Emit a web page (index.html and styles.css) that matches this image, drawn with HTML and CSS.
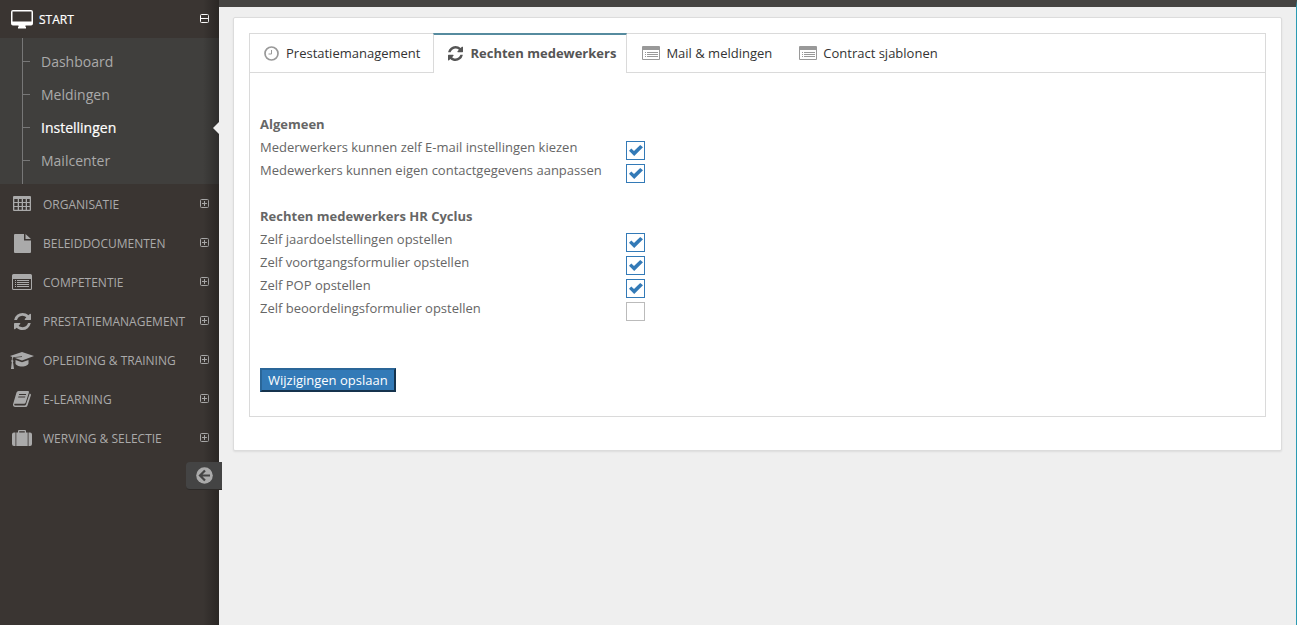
FILE: index.html
```html
<!DOCTYPE html>
<html lang="nl">
<head>
<meta charset="utf-8">
<title>Instellingen - Rechten medewerkers</title>
<link rel="stylesheet" href="styles.css">
</head>
<body>
<svg class="defs" aria-hidden="true">
  <symbol id="plus" viewBox="0 0 9 9"><path d="M1.500.5h6a1 1 0 0 1 1 1v6a1 1 0 0 1-1 1h-6a1 1 0 0 1-1-1v-6a1 1 0 0 1 1-1zM2 4.500h5M4.500 2v5" fill="none" stroke="currentColor"/></symbol>
  <symbol id="minus" viewBox="0 0 9 9"><path d="M1.500.5h6a1 1 0 0 1 1 1v6a1 1 0 0 1-1 1h-6a1 1 0 0 1-1-1v-6a1 1 0 0 1 1-1zM1 4.500h7" fill="none" stroke="currentColor"/></symbol>
  <symbol id="list" viewBox="0 0 20 16"><path fill="currentColor" fill-rule="evenodd" d="M1.500 0h17A1.500 1.500 0 0 1 20 1.500v13a1.500 1.500 0 0 1-1.500 1.500h-17A1.500 1.500 0 0 1 0 14.500v-13A1.500 1.500 0 0 1 1.500 0zM1 5v9.500l.5.5h17l.5-.5V5zM3 6h1v1H3zM5 6h12v1H5zM3 8h1v1H3zM5 8h12v1H5zM3 10h1v1H3zM5 10h12v1H5zM3 12h1v1H3zM5 12h12v1H5z"/></symbol>
  <symbol id="list-small" viewBox="0 0 18 14"><path fill="currentColor" fill-rule="evenodd" d="M1 0h16a1 1 0 0 1 1 1v12a1 1 0 0 1-1 1H1a1 1 0 0 1-1-1V1a1 1 0 0 1 1-1zM1 4v9h16V4zM3 6h1v1H3zM5 6h11v1H5zM3 8h1v1H3zM5 8h11v1H5zM3 10h1v1H3zM5 10h11v1H5z"/></symbol>
  <symbol id="refresh" viewBox="0 0 1536 1536"><path fill="currentColor" d="M1511 928q0 5-1 7-64 268-268 434.500T764 1536q-146 0-282.500-55T238 1324l-129 129q-19 19-45 19t-45-19-19-45V960q0-26 19-45t45-19h448q26 0 45 19t19 45-19 45l-137 137q71 66 161 102t187 36q134 0 250-65t186-179q11-17 53-117 8-23 30-23h192q13 0 22.500 9.500t9.500 22.500zm25-800v448q0 26-19 45t-45 19h-448q-26 0-45-19t-19-45 19-45l138-138Q969 256 768 256q-134 0-250 65T332 500q-11 17-53 117-8 23-30 23H50q-13 0-22.500-9.500T18 608v-7q65-268 270-434.500T768 0q146 0 284 55.500T1297 212l130-129q19-19 45-19t45 19 19 45z"/></symbol>
  <symbol id="check" viewBox="0 0 14 11"><path fill="currentColor" d="M0 5.800 2.300 3.500 5 6.100 11.200 0 14 2.300 5.200 11z"/></symbol>
</svg>
<div class="app">
  <aside class="sidebar">
    <nav aria-label="Hoofdmenu">
      <a class="menu-item open" href="#"><svg class="menu-icon" viewBox="0 0 22 19" width="22" height="19"><path fill="currentColor" fill-rule="evenodd" d="M2 0h18a2 2 0 0 1 2 2v11.500a2 2 0 0 1-2 2h-5.500V17H15v1.500H7V17h.5v-1.500H2a2 2 0 0 1-2-2V2a2 2 0 0 1 2-2zM1.500 1.500v10h19v-10z"/></svg><span>START</span><svg class="toggle" width="9" height="9"><use href="#minus"/></svg></a>
      <ul class="submenu">
        <li><a href="#">Dashboard</a></li>
        <li><a href="#">Meldingen</a></li>
        <li class="current"><a href="#" aria-current="page">Instellingen</a></li>
        <li><a href="#">Mailcenter</a></li>
      </ul>
      <a class="menu-item" href="#"><svg class="menu-icon" viewBox="0 0 18 16" width="18" height="16"><path fill="currentColor" fill-rule="evenodd" d="M1 0h16a1 1 0 0 1 1 1v13a1 1 0 0 1-1 1H1a1 1 0 0 1-1-1V1a1 1 0 0 1 1-1zM1.300 3v3h3.400V3zm4.700 0v3h2.700V3zm4 0v3h2.700V3zm4 0v3h2.700V3zM1.300 7v3h3.400V7zM6 7v3h2.700V7zm4 0v3h2.700V7zm4 0v3h2.700V7zM1.300 11v2.700h3.400V11zM6 11v2.700h2.700V11zm4 0v2.700h2.700V11zm4 0v2.700h2.700V11z"/></svg><span>ORGANISATIE</span><svg class="toggle" width="9" height="9"><use href="#plus"/></svg></a>
      <a class="menu-item" href="#"><svg class="menu-icon" viewBox="0 0 17 19" width="17" height="19"><path fill="currentColor" d="M1 0h9v6.500h7V18a1 1 0 0 1-1 1H1a1 1 0 0 1-1-1V1a1 1 0 0 1 1-1zm10.500 0L17 5h-5.500z"/></svg><span>BELEIDDOCUMENTEN</span><svg class="toggle" width="9" height="9"><use href="#plus"/></svg></a>
      <a class="menu-item" href="#"><svg class="menu-icon" width="20" height="16"><use href="#list"/></svg><span>COMPETENTIE</span><svg class="toggle" width="9" height="9"><use href="#plus"/></svg></a>
      <a class="menu-item" href="#"><svg class="menu-icon" width="17" height="17"><use href="#refresh"/></svg><span>PRESTATIEMANAGEMENT</span><svg class="toggle" width="9" height="9"><use href="#plus"/></svg></a>
      <a class="menu-item" href="#"><svg class="menu-icon" viewBox="0 0 24 17" width="24" height="17"><path fill="currentColor" d="M12 0 24 4 12 8.500 4.500 5.800 12 5V4.200L3.300 5.300Q2.600 6 2.600 8L3.600 9 3 10l1 7H1l.8-7L1 9l.8-1q0-2 .4-3L0 4zM5.500 8 12 10.300 18.500 8v3.500c0 1.500-3 3-6.500 3s-6.500-1.500-6.500-3z"/></svg><span>OPLEIDING &amp; TRAINING</span><svg class="toggle" width="9" height="9"><use href="#plus"/></svg></a>
      <a class="menu-item" href="#"><svg class="menu-icon" viewBox="0 0 18 16" width="18" height="16"><path fill="currentColor" fill-rule="evenodd" d="M5.500 0H15q1.300.2.900 1.500l-3.200 10q-.4 1.300-1.700 1.300H1.600q-.6.400-.2 1.100.3.600 1 .6h9.200q1 0 1.400-1.100L16.700 2.500q1.500.4 1.200 1.800L14.500 14.500Q14 16 12.400 16H2q-1.600 0-2-1.800-.1-.7.200-1.400L3.500 1.500Q4 .3 5.500 0zm.7 3-.3 1h7l.3-1zm-.8 2.500-.3 1h7l.3-1z"/></svg><span>E-LEARNING</span><svg class="toggle" width="9" height="9"><use href="#plus"/></svg></a>
      <a class="menu-item" href="#"><svg class="menu-icon" viewBox="0 0 20 16" width="20" height="16"><path fill="currentColor" fill-rule="evenodd" d="M4.300 2.500H6V1q0-1 1-1h6q1 0 1 1v1.500h1.700V16H4.300zM7.200 2.500h5.600V1.200H7.200zM3.500 2.500V16H2q-2 0-2-2V4.500q0-2 2-2zM16.500 2.500V16H18q2 0 2-2V4.500q0-2-2-2z"/></svg><span>WERVING &amp; SELECTIE</span><svg class="toggle" width="9" height="9"><use href="#plus"/></svg></a>
    </nav>
    <button class="collapse" type="button" aria-label="Menu inklappen"><svg viewBox="0 0 17 17" width="17" height="17"><circle cx="8.500" cy="8.500" r="8.300" fill="#aaa"/><path d="M9 3.500 4 8.500l5 5M4.500 8.500h9.500" fill="none" stroke="#444" stroke-width="2.200"/></svg></button>
  </aside>
  <main class="main">
    <section class="card">
      <div class="panel">
        <nav class="tabs" aria-label="Instellingen">
          <a class="tab first" href="#"><svg viewBox="0 0 15 15" width="15" height="15"><circle cx="7.500" cy="7.500" r="6.500" fill="none" stroke="currentColor" stroke-width="1.700"/><path d="M7.500 4v4H4.500" fill="none" stroke="currentColor"/></svg>Prestatiemanagement</a>
          <a class="tab active" href="#" aria-current="true"><svg width="15" height="15"><use href="#refresh"/></svg>Rechten medewerkers</a>
          <a class="tab" href="#"><svg width="18" height="14"><use href="#list-small"/></svg>Mail &amp; meldingen</a>
          <a class="tab" href="#"><svg width="18" height="14"><use href="#list-small"/></svg>Contract sjablonen</a>
        </nav>
        <form class="settings">
          <h2>Algemeen</h2>
          <div class="row"><label for="r1">Mederwerkers kunnen zelf E-mail instellingen kiezen</label><span class="box"><input id="r1" type="checkbox" checked><svg><use href="#check"/></svg></span></div>
          <div class="row"><label for="r2">Medewerkers kunnen eigen contactgegevens aanpassen</label><span class="box"><input id="r2" type="checkbox" checked><svg><use href="#check"/></svg></span></div>
          <h2 class="next">Rechten medewerkers HR Cyclus</h2>
          <div class="row"><label for="r3">Zelf jaardoelstellingen opstellen</label><span class="box"><input id="r3" type="checkbox" checked><svg><use href="#check"/></svg></span></div>
          <div class="row"><label for="r4">Zelf voortgangsformulier opstellen</label><span class="box"><input id="r4" type="checkbox" checked><svg><use href="#check"/></svg></span></div>
          <div class="row"><label for="r5">Zelf POP opstellen</label><span class="box"><input id="r5" type="checkbox" checked><svg><use href="#check"/></svg></span></div>
          <div class="row"><label for="r6">Zelf beoordelingsformulier opstellen</label><span class="box"><input id="r6" type="checkbox"><svg><use href="#check"/></svg></span></div>
          <button class="save" type="button">Wijzigingen opslaan</button>
        </form>
      </div>
    </section>
  </main>
</div>
</body>
</html>
```
FILE: styles.css
```css
* { box-sizing: border-box; }
body { margin: 0; font: 13px/23px "Open Sans", sans-serif; color: #666; background: #efefef; }
a { color: inherit; text-decoration: none; }
.defs { display: none; }
.app { display: flex; min-height: 100vh; }

.sidebar { position: relative; flex: none; width: 219px; background: #3a3532; color: #aaa; }
.sidebar::after { content: ""; position: absolute; inset: 0 0 0 auto; width: 16px; background: linear-gradient(to right, transparent, rgba(0, 0, 0, .28)); pointer-events: none; }
.menu-item { display: grid; grid-template-columns: 24px 1fr 9px; align-items: center; column-gap: 9px; height: 39px; padding: 1px 10px 0; font-size: 12px; white-space: nowrap; }
.menu-icon { justify-self: center; }
.menu-item .toggle { margin-bottom: 1px; }
.menu-item.open { height: 38px; column-gap: 5px; color: #fff; }
.menu-item.open .toggle { margin-bottom: 2px; }
.submenu { position: relative; margin: 0; padding: 7px 0; list-style: none; background: #403f3d; font-size: 14px; }
.submenu::before { content: ""; position: absolute; left: 22px; top: 0; bottom: 0; width: 1px; background: #777; }
.submenu li { position: relative; display: flex; align-items: center; height: 33px; }
.submenu li::before { content: ""; width: 8px; height: 1px; margin: 0 11px 0 22px; background: #777; }
.submenu .current { color: #fff; }
.current::after { content: ""; position: absolute; z-index: 1; right: 0; border: solid transparent; border-width: 6px 6px 6px 0; border-right-color: #efefef; }
.current a, .open span { -webkit-text-stroke: .2px; }
.collapse { position: absolute; z-index: 1; right: -3px; top: 462px; display: grid; place-items: center; width: 36px; height: 28px; padding: 0; border: 0; border-bottom: 1px solid #2d2a28; border-radius: 4px 0 0 4px; background: #444; }

.main { flex: 1; min-width: 0; padding: 10px 14px 24px; border-top: 7px solid #464442; border-right: 1px solid #2b9bb3; }
.card { padding: 15px 15px 33px; border: 1px solid #dcdcdc; border-radius: 2px; background: #fff; box-shadow: 0 1px 2px rgba(0, 0, 0, .08); }
.panel { border: 1px solid #dadada; }
.tabs { display: flex; height: 39px; border-bottom: 1px solid #dadada; color: #333; }
.tab { display: flex; align-items: center; gap: 6px; padding: 0 12px 0 15px; white-space: nowrap; }
.tab svg { color: #999; }
.tab.first { gap: 7px; padding: 0 13px 0 14px; }
.tab.active { gap: 7px; margin: -1px 0; padding: 0 10px 2px 14px; border: solid #dadada; border-width: 2px 1px 0; border-top-color: #568b9f; background: #fff; color: #555; font-weight: 700; }
.tab.active svg { color: #555; }

.settings { padding: 40px 10px 24px; }
.settings h2 { margin: 0; font-size: 13px; line-height: 23px; font-weight: 700; }
.settings h2.next { margin-top: 23px; }
.row { display: grid; grid-template-columns: 366px 19px; height: 23px; }
.box { position: relative; display: block; width: 19px; height: 19px; margin-top: 5px; color: #337ab7; }
.box input { appearance: none; display: block; width: 19px; height: 19px; margin: 0; border: 1px solid #bbb; background: #fff; }
.box input:checked { border-color: #337ab7; }
.box svg { position: absolute; left: 3px; top: 4px; width: 14px; height: 11px; visibility: hidden; pointer-events: none; }
.box input:checked + svg { visibility: visible; }
.save { display: block; height: 24px; margin-top: 48px; padding: 0 6px; border: 2px solid; border-color: #2a6698 #15334d #15334d #2a6698; background: #337ab7; color: #fff; font: 13px/20px "Open Sans", sans-serif; }
```
